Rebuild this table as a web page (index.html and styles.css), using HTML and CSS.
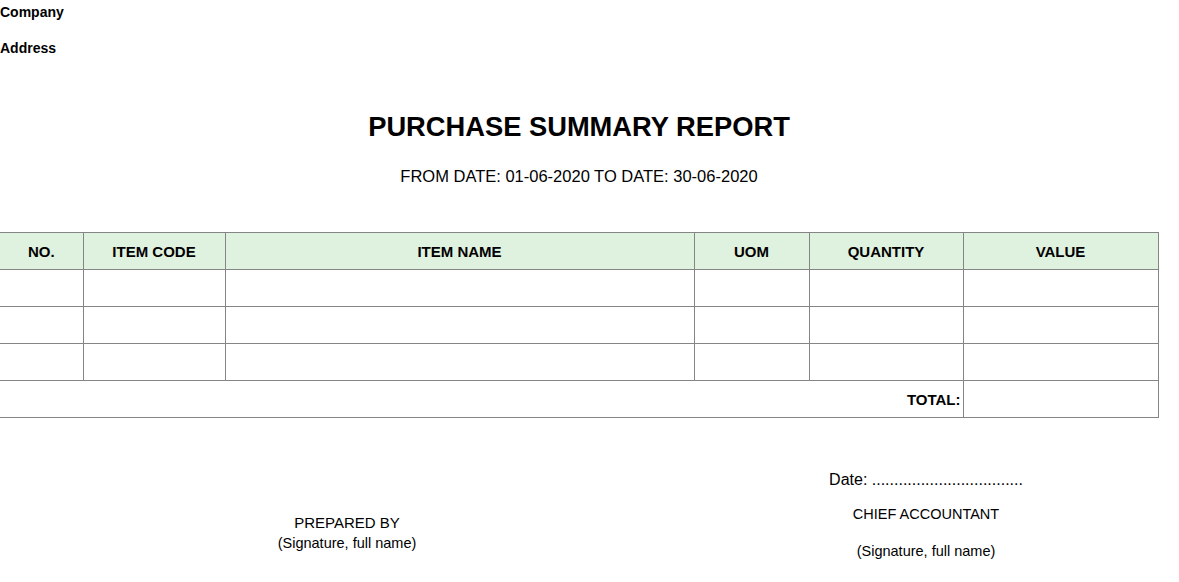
FILE: index.html
```html
<!DOCTYPE html>
<html>
<head>
<meta charset="utf-8">
<link rel="stylesheet" href="styles.css">
</head>
<body>
<div class="page">
  <div class="company">Company</div>
  <div class="address">Address</div>
  <h1 class="title">PURCHASE SUMMARY REPORT</h1>
  <div class="period">FROM DATE: 01-06-2020 TO DATE: 30-06-2020</div>
  <table class="report">
    <colgroup>
      <col class="c-no"><col class="c-code"><col class="c-name"><col class="c-uom"><col class="c-qty"><col class="c-val">
    </colgroup>
    <thead>
      <tr><th class="first">NO.</th><th>ITEM CODE</th><th>ITEM NAME</th><th>UOM</th><th>QUANTITY</th><th>VALUE</th></tr>
    </thead>
    <tbody>
      <tr><td class="first"></td><td></td><td></td><td></td><td></td><td></td></tr>
      <tr><td class="first"></td><td></td><td></td><td></td><td></td><td></td></tr>
      <tr><td class="first"></td><td></td><td></td><td></td><td></td><td></td></tr>
      <tr><td class="first total-label" colspan="5">TOTAL:</td><td></td></tr>
    </tbody>
  </table>
  <div class="signs">
    <div class="sign sign-left">
      <div class="role role-left">PREPARED BY</div>
      <div class="hint">(Signature, full name)</div>
    </div>
    <div class="sign sign-right">
      <div class="date">Date: ..................................</div>
      <div class="role">CHIEF ACCOUNTANT</div>
      <div class="hint hint-right">(Signature, full name)</div>
    </div>
  </div>
</div>
</body>
</html>
```
FILE: styles.css
```css
html, body {
  margin: 0;
  padding: 0;
  background: #fff;
}
body {
  font-family: "Liberation Sans", Arial, sans-serif;
  color: #000;
}
.page {
  width: 1158px;
}
.company {
  font-weight: bold;
  font-size: 14px;
  line-height: 24px;
}
.address {
  font-weight: bold;
  font-size: 14px;
  line-height: 24px;
  margin-top: 12px;
}
.title {
  margin: 47px 0 0;
  font-size: 27.3px;
  line-height: 40px;
  font-weight: bold;
  text-align: center;
}
.period {
  margin-top: 17px;
  font-size: 16.5px;
  line-height: 24px;
  text-align: center;
}
.report {
  margin-top: 44px;
  border-collapse: collapse;
  table-layout: fixed;
  width: 1158px;
}
.c-no { width: 83px; }
.c-code { width: 142px; }
.c-name { width: 469px; }
.c-uom { width: 115px; }
.c-qty { width: 154px; }
.c-val { width: 195px; }
.report th, .report td {
  border: 1px solid #858585;
  height: 37px;
  padding: 0;
  box-sizing: border-box;
}
.report th {
  background: #dff1df;
  font-size: 15px;
  font-weight: bold;
  text-align: center;
  vertical-align: middle;
}
.report .first {
  border-left: none;
}
.report .total-label {
  text-align: right;
  font-weight: bold;
  font-size: 15px;
  padding-right: 2px;
  vertical-align: middle;
}
.signs {
  display: grid;
  grid-template-columns: 694px 464px;
  text-align: center;
}
.sign-left {
  padding-top: 94px;
}
.sign-right {
  padding-top: 52px;
}
.role {
  font-size: 14.5px;
  line-height: 21px;
}
.role-left {
  font-size: 15px;
}
.hint {
  font-size: 14.5px;
  line-height: 21px;
}
.date {
  font-size: 16px;
  line-height: 20px;
  margin-bottom: 14px;
}
.hint-right {
  margin-top: 16px;
}
```
